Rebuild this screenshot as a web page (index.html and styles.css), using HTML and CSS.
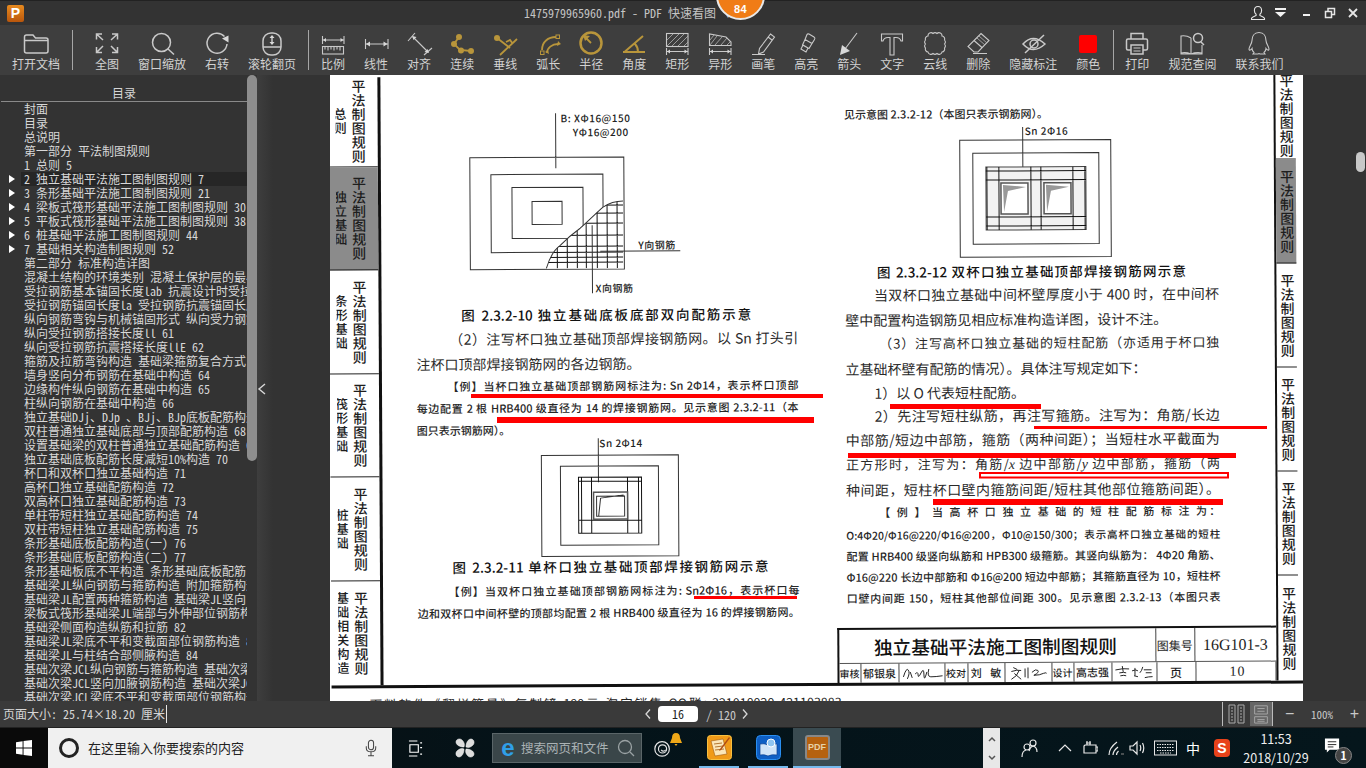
FILE: index.html
```html
<!DOCTYPE html>
<html lang="zh">
<head>
<meta charset="utf-8">
<title>PDF 快速看图</title>
<link rel="stylesheet" href="styles.css">
</head>
<body>
<div class="app">
  <header class="titlebar">
    <div class="logo">P</div>
    <div class="doc-title">1475979965960.pdf - PDF 快速看图 ∨</div>
    <div class="badge">84</div>
    <div class="winctl">
      <svg class="wi wi-user" viewBox="0 0 16 16"><path d="M8 1.500c-2.300 0-3.600 1.800-3.600 4 0 1.600.7 3 1.700 3.800v1.200c-1.500.6-4 1.400-4.600 2.800v1.200h13v-1.200c-.6-1.400-3.100-2.200-4.600-2.800V9.300c1-.8 1.700-2.200 1.700-3.800 0-2.200-1.300-4-3.600-4z"/></svg>
      <svg class="wi wi-menu" viewBox="0 0 12 12"><path class="solid" d="M0 1h11v2H0zM0 5h11L5.500 10z"/></svg>
      <svg class="wi wi-min" viewBox="0 0 12 12"><path class="solid" d="M2 7h7v2H2z"/></svg>
      <svg class="wi wi-max" viewBox="0 0 12 12"><path d="M1.500 4.500h6v6h-6zM4 4.500V1.500h6.500v6h-3" stroke-width="1.500"/></svg>
      <svg class="wi wi-close" viewBox="0 0 12 12"><path d="M2 2l8 8M10 2l-8 8" stroke-width="1.800"/></svg>
    </div>
  </header>

  <nav class="toolbar">
    <div class="tool"><svg viewBox="0 0 28 26"><path d="M2.500 7q0-2 2-2h6.500l2.500 3H24q2 0 2 2v11q0 2-2 2H4.500q-2 0-2-2zM2.500 10.500H26"/></svg><span>打开文档</span></div>
    <i class="sep sep-a"></i>
    <div class="tool"><svg viewBox="0 0 28 26"><path d="M10 10L3.500 4M3.500 9.500V4H9M18 10l6.500-6M19 4h5.500v5.500M10 16l-6.500 6.500M3.500 17v5.500H9M18 16l6.500 6.500M24.500 17v5.500H19"/></svg><span>全图</span></div>
    <div class="tool"><svg viewBox="0 0 28 26"><circle cx="13.500" cy="12.500" r="9"/><path d="M20 19l6 5.500"/></svg><span>窗口缩放</span></div>
    <div class="tool"><svg viewBox="0 0 28 26"><path d="M21.500 6.500A10 10 0 1 0 24 14"/><path class="solid" d="M19 8.500l6.500-3v7z"/></svg><span>右转</span></div>
    <div class="tool"><svg viewBox="0 0 28 26"><rect x="5" y="3" width="18" height="22" rx="8"/><path d="M5 17h18M14 6.500v7"/><path class="solid" d="M11.500 8L14 5l2.500 3zM11.500 12l2.500 3 2.500-3z"/></svg><span>滚轮翻页</span></div>
    <i class="sep sep-b"></i>
    <div class="tool"><svg viewBox="0 0 28 26"><path class="thin" d="M3.500 6v8M25 6v8M3.500 10H25"/><path class="solid" d="M4 10l3-2v4zM24.500 10l-3-2v4z"/><rect class="thin" x="3.500" y="16.500" width="21" height="7.500"/><path class="thin" d="M6 16.500v3M9 16.500v4M12 16.500v3M15 16.500v4M18 16.500v3M21 16.500v4"/></svg><span>比例</span></div>
    <div class="tool"><svg viewBox="0 0 28 26"><path class="thin" d="M3.500 9v10M26 9v10M3.500 14H26"/><path class="solid" d="M4 14l4-2.500v5zM25.500 14l-4-2.500v5z"/></svg><span>线性</span></div>
    <div class="tool"><svg viewBox="0 0 28 26"><path class="thin" d="M3 11l7-8M19 25l8-7M8 7l15 15"/><path class="solid" d="M7 6l4.500 1-3 3zM24 23l-4.500-1 3-3z"/></svg><span>对齐</span></div>
    <div class="tool gold"><svg viewBox="0 0 28 26"><path d="M11 7L6 14l6 6 11 1"/><circle class="dot" cx="11" cy="7" r="3"/><circle class="dot" cx="6" cy="14" r="3"/><circle class="dot" cx="13" cy="20.500" r="3"/><circle class="dot" cx="23" cy="21" r="3"/></svg><span>连续</span></div>
    <div class="tool gold"><svg viewBox="0 0 28 26"><path d="M6 8l13 10M26 9L9 25M15 12l4-2 3 4"/><circle class="dot" cx="6" cy="8" r="3"/></svg><span>垂线</span></div>
    <div class="tool gold"><svg viewBox="0 0 28 26"><path d="M8 20C8 12 14 7 22 7M13 23c0-5 5-9 11-9"/><rect class="fine" x="22" y="5" width="3.500" height="3.500"/><rect class="fine" x="6.500" y="21" width="3.500" height="3.500"/><path class="dotp" d="M24 11l3 3-4 2zM11 22l3-2 1 4z"/></svg><span>弧长</span></div>
    <div class="tool gold"><svg viewBox="0 0 28 26"><circle cx="14" cy="13" r="10.500" stroke-width="2.500"/><path d="M14 13L8 7"/><path class="dotp" d="M6 5l7 1-5 5z"/></svg><span>半径</span></div>
    <div class="tool gold"><svg viewBox="0 0 28 26"><path d="M3 22h22M5 21.500L23 6M15 14c2 2 3 5 3 8" stroke-width="2"/></svg><span>角度</span></div>
    <div class="tool"><svg viewBox="0 0 28 26"><rect class="thin" x="3.500" y="3.500" width="21.500" height="13"/><path class="hatch" d="M4 10l6-6M4 16l12-12M9 16L21 4M15 16L25 6M21 16l4-4"/><path class="thin" d="M3.500 18v7M25 18v7M3.500 21.500H25"/><path class="solid" d="M4 21.500l3-2v4zM24.500 21.500l-3-2v4z"/></svg><span>矩形</span></div>
    <div class="tool"><svg viewBox="0 0 28 26"><path class="thin" d="M3.500 4v11.500H25v-3.500l-5-5z"/><path class="hatch" d="M4 10l4-5M4 15L11 6M9 15l7-8M15 15l6-7M21 15l3-3"/><path class="thin" d="M3.500 18v7M25 18v7M3.500 21.500H25"/><path class="solid" d="M4 21.500l3-2v4zM24.500 21.500l-3-2v4z"/></svg><span>异形</span></div>
    <div class="tool"><svg viewBox="0 0 28 26"><path class="thin" d="M21.500 4l4 3-11 15-5 2 1-5.500zM19 7l4 3M3 24.500h13"/></svg><span>画笔</span></div>
    <div class="tool"><svg viewBox="0 0 28 26"><path class="thin" d="M17 4l5 3q1.500 1 .5 2.500L20 13.500 13 9.500l2-5q.5-1 2-.5zM13 9.500l7 4-3 5-6.500-3.500zM11 15l5 3-2 4-5-3z"/></svg><span>高亮</span></div>
    <div class="tool"><svg viewBox="0 0 28 26"><path class="thin" d="M22 3L10 19"/><path class="solid" d="M5 25l2-10 8 6z"/></svg><span>箭头</span></div>
    <div class="tool"><svg viewBox="0 0 28 26"><path class="thin" d="M3.500 4H24.500V11H23Q22 7.500 18 7.500H16V25H12V7.500H10Q6 7.500 5 11H3.500Z"/></svg><span>文字</span></div>
    <div class="tool"><svg viewBox="0 0 28 26"><path class="thin" d="M7 6a3 3 0 0 1 5-2.500 3 3 0 0 1 4 0A3 3 0 0 1 21 6a3 3 0 0 1 2.500 4 3 3 0 0 1 0 4 3 3 0 0 1 0 4A3 3 0 0 1 21 22a3 3 0 0 1-5 1.500 3 3 0 0 1-4 0A3 3 0 0 1 7 22a3 3 0 0 1-2.500-4 3 3 0 0 1 0-4 3 3 0 0 1 0-4A3 3 0 0 1 7 6z"/></svg><span>云线</span></div>
    <div class="tool"><svg viewBox="0 0 28 26"><path class="thin" d="M17 3.500l8 7-11 11.500h-4l-6-5.500zM10 10.500l8.500 7.500M9 23.500h14"/><path class="hatch" d="M13 8l8 7M15 6l8 7"/></svg><span>删除</span></div>
    <div class="tool"><svg viewBox="0 0 28 26"><path d="M4 14q10-11 22 0-12 11-22 0z"/><circle cx="15" cy="14" r="4"/><path d="M6 23L25 5"/></svg><span>隐藏标注</span></div>
    <div class="tool"><svg viewBox="0 0 28 26"><rect class="red" x="5" y="5" width="18" height="18" rx="2"/></svg><span>颜色</span></div>
    <i class="sep sep-c"></i>
    <div class="tool"><svg viewBox="0 0 28 26"><path d="M8 9V3.500h12V9M8 20H5q-1.500 0-1.500-1.500v-8Q3.500 9 5 9h18q1.500 0 1.500 1.500v8Q24.500 20 23 20h-3"/><rect x="8" y="15" width="12" height="9"/><path class="thin" d="M10.500 18h7M10.500 21h7"/></svg><span>打印</span></div>
    <div class="tool"><svg viewBox="0 0 28 26"><path class="thin" d="M13 8Q8 5 3 6v17q5-1 10 1 5-2 11-1v-8M13 8v16M3 23v1h21v-1"/><circle cx="20" cy="8" r="4.500"/><path d="M23 12l3 3"/></svg><span>规范查阅</span></div>
    <div class="tool"><svg viewBox="0 0 28 26"><path class="thin" d="M14 2.500c-5 0-7 4-7 8 0 3-3 6-3 8.500 0 2 2 1 3-.5 0 2 1 3 2 4l-1 1.500h5l1-.5 1 .5h5l-1-1.500c1-1 2-2 2-4 1 1.500 3 2.500 3 .5 0-2.500-3-5.500-3-8.500 0-4-2-8-7-8z"/></svg><span>联系我们</span></div>
  </nav>

  <main class="main">
    <aside class="sidebar">
      <div class="toc-head">目录</div>
      <ul class="toc">
        <li>封面</li>
        <li>目录</li>
        <li>总说明</li>
        <li>第一部分 平法制图规则</li>
        <li>1 总则 5</li>
        <li class="has-kids selected">2 独立基础平法施工图制图规则 7</li>
        <li class="has-kids">3 条形基础平法施工图制图规则 21</li>
        <li class="has-kids">4 梁板式筏形基础平法施工图制图规则 30</li>
        <li class="has-kids">5 平板式筏形基础平法施工图制图规则 38</li>
        <li class="has-kids">6 桩基础平法施工图制图规则 44</li>
        <li class="has-kids">7 基础相关构造制图规则 52</li>
        <li>第二部分 标准构造详图</li>
        <li>混凝土结构的环境类别 混凝土保护层的最小厚度</li>
        <li>受拉钢筋基本锚固长度lab 抗震设计时受拉钢筋</li>
        <li>受拉钢筋锚固长度la 受拉钢筋抗震锚固长度</li>
        <li>纵向钢筋弯钩与机械锚固形式 纵向受力钢筋</li>
        <li>纵向受拉钢筋搭接长度ll 61</li>
        <li>纵向受拉钢筋抗震搭接长度llE 62</li>
        <li>箍筋及拉筋弯钩构造 基础梁箍筋复合方式</li>
        <li>墙身竖向分布钢筋在基础中构造 64</li>
        <li>边缘构件纵向钢筋在基础中构造 65</li>
        <li>柱纵向钢筋在基础中构造 66</li>
        <li>独立基础DJj、DJp 、BJj、BJp底板配筋构造</li>
        <li>双柱普通独立基础底部与顶部配筋构造 68</li>
        <li>设置基础梁的双柱普通独立基础配筋构造 69</li>
        <li>独立基础底板配筋长度减短10%构造 70</li>
        <li>杯口和双杯口独立基础构造 71</li>
        <li>高杯口独立基础配筋构造 72</li>
        <li>双高杯口独立基础配筋构造 73</li>
        <li>单柱带短柱独立基础配筋构造 74</li>
        <li>双柱带短柱独立基础配筋构造 75</li>
        <li>条形基础底板配筋构造(一) 76</li>
        <li>条形基础底板配筋构造(二) 77</li>
        <li>条形基础板底不平构造 条形基础底板配筋</li>
        <li>基础梁JL纵向钢筋与箍筋构造 附加箍筋构造</li>
        <li>基础梁JL配置两种箍筋构造 基础梁JL竖向</li>
        <li>梁板式筏形基础梁JL端部与外伸部位钢筋构造</li>
        <li>基础梁侧面构造纵筋和拉筋 82</li>
        <li>基础梁JL梁底不平和变截面部位钢筋构造 83</li>
        <li>基础梁JL与柱结合部侧腋构造 84</li>
        <li>基础次梁JCL纵向钢筋与箍筋构造 基础次梁</li>
        <li>基础次梁JCL竖向加腋钢筋构造 基础次梁JCL</li>
        <li>基础次梁JCL梁底不平和变截面部位钢筋构造</li>
      </ul>
    </aside>
    <div class="side-scroll"><div class="side-thumb"></div></div>
    <div class="gutter"><svg class="gutter-arrow" viewBox="0 0 10 14"><path d="M8 2L2 7l6 5"/></svg></div>

    <section class="pdf">
      <div class="scan">
        <div class="sheet">
          <div class="ltabs">
            <div class="tab t-first"><div class="tab-small"><b>总则</b></div><b class="tab-main">平法制图规则</b></div>
            <div class="tab on"><div class="tab-small"><b>独立基础</b></div><b class="tab-main">平法制图规则</b></div>
            <div class="tab"><div class="tab-small"><b>条形基础</b></div><b class="tab-main">平法制图规则</b></div>
            <div class="tab"><div class="tab-small"><b>筏形基础</b></div><b class="tab-main">平法制图规则</b></div>
            <div class="tab"><div class="tab-small"><b>桩基础</b></div><b class="tab-main">平法制图规则</b></div>
            <div class="tab"><div class="tab-small"><b>基础相关构造</b></div><b class="tab-main">平法制图规则</b></div>
          </div>

          <div class="col col-left">
            <svg class="fig fig1" viewBox="416 105 382 195">
              <defs><clipPath id="mesh"><path d="M546 268C549 258 553 250 560 245 566 239 573 233 580 228 588 221 596 213 603 207 609 203 615 201 623 201V268Z"/></clipPath></defs>
              <path class="ln-w" d="M556 113V168M470 157H624V269H470ZM491 174H603V252H491ZM512 187H583V238H512ZM532 201H562V224H532Z"/>
              <path class="white" d="M546 268C549 258 553 250 560 245 566 239 573 233 580 228 588 221 596 213 603 207 609 203 615 201 623 201V268Z"/>
              <g clip-path="url(#mesh)"><path class="ln-b" d="M557 200V270M567 200V270M577 200V270M586 200V270M597 200V270M607 200V270M617 200V270M540 205H625M540 213H625M540 223H625M540 235H625M540 246H625M540 252H625M540 257H625M540 262H625"/></g>
              <path class="ln-w" d="M546 268C549 258 553 250 560 245 566 239 573 233 580 228 588 221 596 213 603 207 609 203 615 201 623 201M600 251H680M592 225V293"/>
              <text class="fig-t" x="561" y="122">B: XΦ16@150</text>
              <text class="fig-t" x="573" y="136">YΦ16@200</text>
              <text class="fig-t" x="638" y="249">Y向钢筋</text>
              <text class="fig-t" x="595" y="292">X向钢筋</text>
            </svg>
            <p class="cap cap1">图 2.3.2-10 独立基础底板底部双向配筋示意</p>
            <p class="ln ind">（2）注写杯口独立基础顶部焊接钢筋网。以 Sn 打头引</p>
            <p class="ln last">注杯口顶部焊接钢筋网的各边钢筋。</p>
            <p class="ex ind pull">【例】当杯口独立基础顶部钢筋网标注为: Sn 2Φ14，表示杯口顶部</p>
            <p class="ex">每边配置 2 根 HRB400 级直径为 14 的焊接钢筋网。见示意图 2.3.2-11（本</p>
            <p class="ex last">图只表示钢筋网）。</p>
            <svg class="fig fig2" viewBox="416 438 382 120">
              <path class="ln-w" d="M597 438V482M540 455H677V556H540ZM559 466H657V545H559Z"/>
              <path class="ln-b" d="M577 477H640V533H577ZM580 477V533M590 477V533M626 477V533M637 477V533M577 481H640M577 520H640"/>
              <rect class="cup" x="592" y="492" width="34" height="27"/>
              <path class="ln-w" d="M595 496H623V516H595ZM599 498L622 495M597 516L599 498"/>
              <text class="fig-t" x="598" y="447">Sn 2Φ14</text>
            </svg>
            <p class="cap cap2">图 2.3.2-11 单杯口独立基础顶部焊接钢筋网示意</p>
            <p class="ex ind roomy">【例】当双杯口独立基础顶部钢筋网标注为: Sn2Φ16，表示杯口每</p>
            <p class="ex">边和双杯口中间杯壁的顶部均配置 2 根 HRB400 级直径为 16 的焊接钢筋网。</p>
          </div>

          <div class="col col-right">
            <p class="ex last top">见示意图 2.3.2-12（本图只表示钢筋网）。</p>
            <svg class="fig fig3" viewBox="845 123 374 137">
              <path class="ln-w" d="M1023 127V173M960 140H1111V257H960ZM973 153H1099V244H973Z"/>
              <rect class="mesh-bg" x="986" y="167" width="100" height="63"/>
              <path class="ln-b" d="M987 167V230M999 167V230M1031 167V230M1041 167V230M1073 167V230M1085 167V230M986 171H1086M986 180H1086M986 217H1086M986 226H1086"/>
              <rect class="cup" x="1001" y="183" width="27" height="31"/>
              <rect class="cup" x="1044" y="183" width="27" height="31"/>
              <path class="gray" d="M1003 185L1026 187 1008 191 1004 212ZM1046 185L1069 187 1051 191 1047 212Z"/>
              <text class="fig-t" x="1025" y="135">Sn 2Φ16</text>
            </svg>
            <p class="cap cap3">图 2.3.2-12 双杯口独立基础顶部焊接钢筋网示意</p>
            <p class="ln ind">当双杯口独立基础中间杯壁厚度小于 400 时，在中间杯</p>
            <p class="ln last">壁中配置构造钢筋见相应标准构造详图，设计不注。</p>
            <p class="ln small ind3">（3）注写高杯口独立基础的短柱配筋（亦适用于杯口独</p>
            <p class="ln last">立基础杯壁有配筋的情况）。具体注写规定如下：</p>
            <p class="ln ind last">1）以 O 代表短柱配筋。</p>
            <p class="ln ind pull2">2）先注写短柱纵筋，再注写箍筋。注写为：角筋/长边</p>
            <p class="ln">中部筋/短边中部筋，箍筋（两种间距）；当短柱水平截面为</p>
            <p class="ln small">正方形时，注写为：角筋/<em>x</em> 边中部筋/<em>y</em> 边中部筋，箍筋（两</p>
            <p class="ln">种间距，短柱杯口壁内箍筋间距/短柱其他部位箍筋间距）。</p>
            <p class="ex ind pull3">【 例 】 当 高 杯 口 独 立 基 础 的 短 柱 配 筋 标 注 为：</p>
            <p class="ex ex21 gap tight">O:4Φ20/Φ16@220/Φ16@200，Φ10@150/300；表示高杯口独立基础的短柱</p>
            <p class="ex ex21">配置 HRB400 级竖向纵筋和 HPB300 级箍筋。其竖向纵筋为： 4Φ20 角筋、</p>
            <p class="ex ex21">Φ16@220 长边中部筋和 Φ16@200 短边中部筋；其箍筋直径为 10，短柱杯</p>
            <p class="ex ex21">口壁内间距 150，短柱其他部位间距 300。见示意图 2.3.2-13（本图只表</p>

            <div class="block">
              <div class="block-top">
                <div class="block-title">独立基础平法施工图制图规则</div>
                <div class="block-label">图集号</div>
                <div class="block-no">16G101-3</div>
              </div>
              <div class="block-bottom">
                <div class="c c22">审核</div>
                <div class="c c38">郁银泉</div>
                <div class="c c46"><svg class="sig" viewBox="0 0 46 18"><path d="M4 13Q7 3 9 6T8 15M11 8l2 6M16 10q3-3 3 1t3-2 3 2 3-3M30 5q-2 8 2 8 5 0 12-1"/></svg></div>
                <div class="c c23">校对</div>
                <div class="c c37 spread">刘 敏</div>
                <div class="c c47"><svg class="sig" viewBox="0 0 47 18"><path d="M8 4l4 2M6 8q6-2 10-1M14 7q-2 6-8 9M9 10l7 6M20 5v9M23 4v11M27 9q4-4 6-2t-4 5q6 0 10-2 3-1 3 0"/></svg></div>
                <div class="c c22">设计</div>
                <div class="c c38">高志强</div>
                <div class="c c45"><svg class="sig" viewBox="0 0 45 18"><path d="M3 7q8-2 14-1M10 3l1 6M7 10q5-1 7 0M8 13q4-1 6 0M20 8q4-2 6 0M23 5v8M22 13l4 1M31 4q-1 4-3 6M32 7h8M34 10h6M33 15q4-1 8-1"/></svg></div>
                <div class="c c39">页</div>
                <div class="c c-ten">10</div>
              </div>
            </div>
          </div>

          <div class="rtabs">
            <div class="rtab r-first"><b class="tab-main">平法制图规则</b></div>
            <div class="rtab on"><b class="tab-main">平法制图规则</b></div>
            <div class="rtab"><b class="tab-main">平法制图规则</b></div>
            <div class="rtab"><b class="tab-main">平法制图规则</b></div>
            <div class="rtab"><b class="tab-main">平法制图规则</b></div>
            <div class="rtab"><b class="tab-main">平法制图规则</b></div>
          </div>
        </div>
        <p class="foot">下料软件《翻样算量》复制镜 180元 淘宝销售 QQ联: 321010020 421103883</p>
      </div>

      <svg class="marks" viewBox="330 75 973 626">
        <rect x="471" y="394" width="352" height="4"/>
        <rect x="497" y="417" width="317" height="6"/>
        <rect x="694" y="596" width="103" height="3"/>
        <rect x="890" y="404" width="151" height="5"/>
        <rect x="1034" y="426" width="233" height="3"/>
        <rect x="848" y="453" width="388" height="5"/>
        <rect class="ring" x="980" y="473" width="248" height="4.500"/>
        <rect x="933" y="499" width="290" height="6"/>
      </svg>
    </section>

    <div class="right-gutter"><div class="right-thumb"></div></div>
  </main>

  <footer class="status">
    <div class="status-size"><span class="size-text">页面大小: 25.74×18.20 厘米</span></div>
    <div class="pager">
      <svg class="chev" viewBox="0 0 8 12"><path d="M6 1.500L2 6l4 4.500"/></svg>
      <div class="page-box">16</div>
      <span class="page-total">/ 120</span>
      <svg class="chev" viewBox="0 0 8 12"><path d="M2 1.500L6 6l-4 4.500"/></svg>
    </div>
    <div class="view">
      <div class="view-btn"><svg viewBox="0 0 20 22"><path d="M2 2h6v18H2zM11 2h6v18h-6zM4 5h2M4 8h2M4 11h2M4 14h2M4 17h2M13 5h2M13 8h2M13 11h2M13 14h2M13 17h2"/></svg></div>
      <div class="view-btn lit"><svg viewBox="0 0 22 22"><path d="M4 2h14v9H4zM4 14h14v7H4zM7 5h8M7 8h8M7 17h8M7 19h8"/></svg></div>
    </div>
    <div class="zoomctl"><span class="z-sign">−</span><span class="z-val">100%</span><span class="z-sign">+</span></div>
  </footer>

  <div class="taskbar">
    <div class="start"><svg viewBox="0 0 17 17"><path d="M0 2.300l7-1v6.700H0zM8 1.100l9-1.100v8H8zM0 9h7v6.700l-7-1zM8 9h9v8l-9-1.100z"/></svg></div>
    <div class="search">
      <i class="cortana"></i>
      <span class="search-text">在这里输入你要搜索的内容</span>
      <svg class="mic" viewBox="0 0 14 20"><rect x="4" y="1" width="6" height="11" rx="3"/><path d="M1.500 8v2q0 4.500 5.500 4.500T12.500 10V8M7 14.500V19M3.500 19h7"/></svg>
    </div>
    <div class="tb-slot s-task"><svg class="ti-line" viewBox="0 0 16 18"><path d="M1 1h9M1 17h9M2 5h9v8H2zM13 3h2M13 8h2M13 15h2"/></svg></div>
    <div class="tb-slot s-pin"><svg class="ti-pin" viewBox="0 0 22 22"><path d="M10 10C6 10 2 8 2 5s4-4 6-2 3 4 2 7zM12 10c0-4 2-8 5-8s4 4 2 6-4 3-7 2zM12 12c4 0 8 2 8 5s-4 4-6 2-3-4-2-7zM10 12c0 4-2 8-5 8s-4-4-2-6 4-3 7-2z"/></svg></div>
    <div class="edge-box">
      <span class="edge-e">e</span>
      <span class="edge-text">搜索网页和文件</span>
      <svg class="edge-mag" viewBox="0 0 18 18"><circle cx="8" cy="8" r="6.500"/><path d="M13 13l4 4"/></svg>
    </div>
    <div class="tb-slot s-swirl">
      <svg class="ti-swirl" viewBox="0 0 22 22"><circle cx="10" cy="12" r="8"/><circle cx="10.500" cy="12" r="4.500"/><path d="M14 13q-3 3-5 0"/></svg>
      <svg class="ti-bell" viewBox="0 0 12 14"><path d="M6 0q4 0 4 5l2 5H0l2-5q0-5 4-5zM4.500 11h3L6 13z"/></svg>
    </div>
    <div class="app-btn a1"><svg class="appi" viewBox="0 0 25 25"><rect class="orange-bg" x=".5" y=".5" width="24" height="24" rx="3"/><path class="note" d="M4 6l12-2 4 15-12 2z"/><path class="note-l" d="M7 9l8-1M8 12l8-1M8 15l9-1"/><path class="pen" d="M22 2l1 1-9 12-2 1 1-2z"/></svg></div>
    <div class="app-btn a2"><svg class="appi" viewBox="0 0 25 25"><rect class="blue-bg" x=".5" y=".5" width="24" height="24" rx="4"/><path class="book" d="M4 9q4-1 8 1 4-2 9-1v11q-5-1-9 1-4-2-8-1z"/><circle class="lens" cx="15" cy="8" r="4"/></svg></div>
    <div class="app-btn a3 active"><div class="pdfi">PDF</div></div>
    <div class="tb-fill"></div>
    <div class="tb-scroll"><svg viewBox="0 0 10 30"><path d="M2 8l3-3 3 3M2 23l3 3 3-3"/></svg></div>
    <svg class="tray t-people" viewBox="0 0 20 20"><circle cx="7" cy="9" r="3"/><circle cx="13" cy="5" r="3"/><path d="M2 19q0-6 4-7M9 13q1-4 4-5 4 1 4 6"/></svg>
    <svg class="tray t-up" viewBox="0 0 14 14"><path d="M1 10l6-6 6 6"/></svg>
    <svg class="tray t-batt" viewBox="0 0 16 16"><path d="M3 5h11v8H2V6zM14 7h2v4h-2zM5 1v4M8 1v4M4 3h5"/></svg>
    <svg class="tray t-wifi" viewBox="0 0 18 16"><path d="M2 15q0-7 8-13M6 15q0-4 5-8M9.500 15q0-2 2-4"/><path class="tray-dim" d="M14 14h3"/></svg>
    <svg class="tray t-vol" viewBox="0 0 16 16"><path d="M1 6h3l4-4v12l-4-4H1zM11 5q1.500 3 0 6M13.500 3q2.500 5 0 10"/></svg>
    <svg class="tray t-kbd" viewBox="0 0 23 16"><rect x=".5" y="1" width="22" height="14"/><path d="M3 4.500h17M3 7.500h17M3 10.500h17M6 13h11" stroke-dasharray="1.500 1"/></svg>
    <span class="tray-ime">中</span>
    <span class="tray-sogou">S</span>
    <div class="clock"><span>11:53</span><span>2018/10/29</span></div>
    <div class="notify"><svg viewBox="0 0 18 16"><path class="solid" d="M1 0h15v12H6l-3 3v-3H1z"/><path class="notify-lines" d="M4 3.500h9M4 6.500h9M4 9h6"/></svg><span class="notify-count">1</span></div>
  </div>
</div>
</body>
</html>
```

FILE: styles.css
```css
* { box-sizing: border-box; }
html, body { margin: 0; padding: 0; }
body { width: 1366px; height: 768px; overflow: hidden; background: #333; font-family: "Noto Sans Mono CJK SC", "Noto Sans CJK SC", sans-serif; color: #d6d6d6; font-size: 12px; }
p { margin: 0; }
ul { margin: 0; padding: 0; list-style: none; }
.app { display: flex; flex-direction: column; width: 1366px; height: 768px; position: relative; }

/* title bar */
.titlebar { height: 25px; flex: none; background: #333; border-top: 1px solid #222; display: flex; align-items: center; position: relative; }
.logo { width: 17px; height: 17px; margin-left: 7px; border-radius: 2px; background: linear-gradient(#e78a1f, #b9560c); color: #fff; font: 700 14px/17px "Liberation Sans", sans-serif; text-align: center; }
.doc-title { margin-left: 500px; color: #c4c4c4; line-height: 14px; white-space: nowrap; }
.badge { position: absolute; left: 716px; top: -30px; width: 49px; height: 49px; border-radius: 50%; background: #f07c16; border: 2px solid #e8e8e8; color: #fff; font: 700 11px/1 "Liberation Sans", sans-serif; text-align: center; padding-top: 31px; letter-spacing: .5px; }
.winctl { margin-left: auto; display: flex; align-items: center; height: 24px; }
.wi { display: block; fill: none; stroke: #e6e6e6; stroke-width: 1.100; }
.wi .solid { fill: #f2f2f2; stroke: none; }
.wi-user { width: 16px; height: 16px; margin-right: 9px; }
.wi-menu { width: 12px; height: 12px; margin-right: 14px; }
.wi-min { width: 12px; height: 12px; margin-right: 11px; }
.wi-max { width: 12px; height: 12px; margin-right: 11px; }
.wi-close { width: 12px; height: 12px; margin-right: 7px; }

/* toolbar */
.toolbar { height: 50px; flex: none; background: #3e3e3e; display: flex; align-items: flex-start; gap: 19px; padding: 5px 0 0 12px; }
.tool { display: flex; flex-direction: column; align-items: center; white-space: nowrap; min-width: 0; }
.tool svg { width: 28px; height: 26px; flex: none; margin: 0 -2px; fill: none; stroke: #c9c9c9; stroke-width: 1.500; display: block; }
.tool span { line-height: 15px; color: #d2d2d2; }
.tool .solid { fill: #d8d8d8; stroke: none; }
.tool .thin { stroke-width: 1.100; }
.tool .hatch { stroke-width: .8; stroke: #b5b5b5; }
.tool .red { fill: #f00; stroke: none; }
.gold svg { stroke: #b8953b; stroke-width: 1.800; }
.gold .dot { fill: #b8953b; stroke: none; }
.gold .dotp { fill: #b8953b; stroke: none; }
.gold .fine { stroke-width: 1; }
.sep { display: block; width: 1px; height: 40px; background: #a6a6a6; flex: none; }
.sep-a { margin-left: -7px; margin-right: 3px; }
.sep-b { margin-left: -7px; margin-right: -7px; }
.sep-c { margin-left: -6px; margin-right: -8px; }

/* main area */
.main { display: flex; height: 626px; flex: none; }
.sidebar { width: 247px; flex: none; background: #333; overflow: hidden; }
.toc-head { height: 27px; padding-top: 10px; line-height: 16px; border-bottom: 1px solid #8a8a8a; text-align: center; color: #d6d6d6; margin-left: 1px; }
.toc { padding-top: 0; }
.toc li { height: 14px; line-height: 14px; padding-left: 24px; white-space: nowrap; position: relative; color: #d8d8d8; }
.has-kids::before { content: ""; position: absolute; left: 9px; top: 3px; border-left: 6px solid #fff; border-top: 4px solid transparent; border-bottom: 4px solid transparent; }
.selected { background: linear-gradient(90deg, transparent 21px, #262626 21px); }
.side-scroll { width: 10px; flex: none; background: #333; }
.side-thumb { height: 386px; background: #8e8e8e; border-radius: 5px; }
.gutter { width: 73px; flex: none; display: flex; align-items: center; background: linear-gradient(90deg, #3e3e3e, #333 16px); }
.gutter-arrow { width: 10px; height: 14px; margin-top: 2px; fill: none; stroke: #d8d8d8; stroke-width: 1.400; }

/* PDF page */
.pdf { width: 973px; flex: none; background: #fff; overflow: hidden; position: relative; color: #1e1e1e; font-family: "Noto Sans CJK SC", sans-serif; }
.scan { transform: rotate(-.3deg); transform-origin: 486px 313px; height: 640px; }
.sheet { display: flex; height: 611px; border-bottom: 3px solid #111; }
.ltabs { width: 52px; flex: none; border-right: 3px solid #111; display: flex; flex-direction: column; }
.tab { height: 103.600px; flex: none; display: flex; align-items: center; padding-left: 7px; gap: 5px; border-bottom: 1.500px solid #222; }
.tab:last-child { border-bottom: 0; }
.t-first { height: 89.700px; }
.on { background: #8b8b8b; }
.tab-small { width: 11px; flex: none; display: flex; justify-content: flex-end; overflow: hidden; }
.tab-small b { writing-mode: vertical-rl; font-size: 13px; line-height: 13px; font-weight: 500; letter-spacing: 1px; white-space: nowrap; flex: none; }
.tab-main { writing-mode: vertical-rl; font-size: 14px; line-height: 14px; font-weight: 500; white-space: nowrap; flex: none; display: block; }
.col { display: flex; flex-direction: column; flex: none; }
.col-left { width: 448px; padding: 29px 31.500px 0 34.500px; }
.col-right { width: 444.500px; padding: 29px 55px 0 15.500px; }
.fig { display: block; width: 100%; flex: none; overflow: visible; }
.fig1 { height: 195px; }
.fig2 { height: 120px; margin-top: -2px; }
.fig3 { height: 137px; }
.ln-w { fill: none; stroke: #333; stroke-width: 1; }
.ln-b { fill: none; stroke: #111; stroke-width: 1; }
.white { fill: #fff; }
.cup { fill: #fff; stroke: #555; stroke-width: 1.500; }
.mesh-bg { fill: #f2f2f2; stroke: #444; stroke-width: 1; }
.gray { fill: #999; stroke: none; }
.fig-t { font: 500 10px "Noto Sans CJK SC", sans-serif; fill: #222; letter-spacing: .5px; }
.cap, .ln, .ex { text-align: justify; text-align-last: justify; }
.last { text-align-last: left; }
.cap { font-size: 13.500px; font-weight: 500; white-space: nowrap; color: #111; }
.cap1 { margin: 2px 0 0 45px; width: 290px; line-height: 24px; }
.cap2 { margin: 0 0 0 35px; width: 316px; line-height: 16px; }
.cap3 { margin: 0 0 0 32px; width: 309px; line-height: 22px; }
.ln { font-size: 14px; line-height: 24.500px; color: #2a2a2a; }
.ex { font-size: 11px; line-height: 22px; color: #262626; font-weight: 500; }
.col-left .ind { margin-left: 33px; }
.col-right .ind { margin-left: 29px; }
.col-right .ind3 { margin-left: 34px; }
.col-left .ex.ind { margin-left: 31px; }
.pull { margin-top: -1px; }
.roomy { margin-top: 5px; }
.top { line-height: 20px; }
.pull2 { margin-top: -2px; }
.col-right .pull3 { margin-top: -1.500px; margin-left: 33px; }
.small { font-size: 13px; }
.small em { font-family: "Liberation Serif", serif; font-size: 14px; }
.ex21 { line-height: 21px; }
.tight { font-size: 10.500px; }
.gap { margin-top: 1.500px; }

.block { margin: auto -55px 0 -10px; height: 55px; flex: none; border-top: 2px solid #111; border-left: 2px solid #111; display: flex; flex-direction: column; }
.block-top { height: 34px; flex: none; display: flex; border-bottom: 1px solid #555; }
.block-title { width: 316px; flex: none; font-size: 18.700px; line-height: 34px; font-weight: 500; padding-left: 35px; white-space: nowrap; color: #111; }
.block-label { width: 39px; flex: none; border-left: 1px solid #444; font-size: 12px; line-height: 34px; text-align: center; }
.block-no { flex: 1; border-left: 1px solid #444; font: 16px/34px "Liberation Serif", serif; text-align: center; }
.block-bottom { flex: 1; display: flex; }
.c { border-right: 1px solid #444; font-size: 10px; line-height: 19px; text-align: center; flex: none; white-space: nowrap; font-weight: 500; overflow: hidden; }
.c22 { width: 22px; } .c23 { width: 23px; } .c37 { width: 37px; font-size: 11px; } .c38 { width: 38px; font-size: 11px; } .c39 { width: 39px; font-size: 12px; } .c45 { width: 45px; } .c46 { width: 46px; } .c47 { width: 47px; }
.spread { word-spacing: 6px; }
.c-ten { flex: 1; font: 14px/19px "Liberation Serif", serif; text-align: center; letter-spacing: 1px; padding-left: 4px; }
.sig { display: block; width: 100%; height: 19px; fill: none; stroke: #222; stroke-width: 1; }
.rtabs { width: 22.500px; flex: none; border-left: 2.500px solid #111; display: flex; flex-direction: column; }
.rtab { height: 104px; flex: none; padding-left: 4.500px; display: flex; align-items: center; border-bottom: 1.500px solid #222; }
.rtab:last-child { border-bottom: 0; height: 105px; }
.r-first { height: 87.400px; }
.foot { margin: 8px 0 0 38px; width: 472px; font-size: 12.500px; line-height: 16px; white-space: nowrap; text-align: justify; text-align-last: justify; color: #222; }
.marks { position: absolute; left: 0; top: 0; width: 973px; height: 626px; fill: #f00; }
.marks .ring { fill: #fff; stroke: #f00; stroke-width: 2; }
.right-gutter { flex: 1; background: #333; display: flex; justify-content: flex-end; align-items: flex-start; padding: 77px 1px 0 0; }
.right-thumb { width: 9px; height: 20px; border-radius: 4.500px; background: #c8c8c8; }

/* status bar */
.status { height: 27px; flex: none; background: #3a3a3a; border-bottom: 1px solid #222; display: flex; align-items: center; }
.status-size { width: 640px; flex: none; padding-left: 3px; }
.size-text { display: inline-block; height: 18px; line-height: 18px; padding-right: 1px; border-right: 1px solid #e8e8e8; width: 164px; white-space: nowrap; color: #d6d6d6; }
.pager { display: flex; align-items: center; width: 582px; flex: none; }
.chev { width: 8px; height: 12px; fill: none; stroke: #d8d8d8; stroke-width: 1.300; flex: none; margin-left: 4px; }
.page-box { width: 40px; height: 16px; margin-left: 6px; background: #fff; border-radius: 4px; color: #222; text-align: center; line-height: 16px; }
.page-total { margin-left: 8px; width: 31px; color: #c8c8c8; white-space: nowrap; }
.view { width: 51px; height: 24px; flex: none; display: flex; gap: 3px; padding-left: 4px; border-left: 1px solid #bbb; border-right: 1px solid #bbb; }
.view-btn { width: 20px; display: flex; align-items: center; justify-content: center; }
.view-btn.lit { background: #666; width: 23px; }
.view-btn svg { width: 20px; height: 22px; fill: none; stroke: #aaa; stroke-width: 1; }
.zoomctl { flex: 1; display: flex; justify-content: space-between; align-items: center; padding: 0 7px 0 12px; color: #c8c8c8; }
.z-sign { font: 16px "Liberation Sans", sans-serif; }
.z-val { font-size: 11px; }

/* task bar */
.taskbar { height: 40px; flex: 1; display: flex; align-items: stretch; padding-right: 16px; background: linear-gradient(90deg, #0c0f10, #041319 40%, #05161c); color: #fff; font-family: "Noto Sans CJK SC", sans-serif; }
.start { width: 48px; flex: none; display: flex; align-items: center; justify-content: center; background: #0a0a0a; }
.start svg { width: 16px; height: 16px; fill: #fff; }
.search { width: 344px; flex: none; background: #f0f0f0; color: #222; display: flex; align-items: center; padding-left: 11px; }
.cortana { width: 20px; height: 20px; border-radius: 50%; border: 3px solid #222; flex: none; display: block; }
.search-text { margin-left: 9px; font-size: 13px; line-height: 18px; white-space: nowrap; }
.mic { width: 12px; height: 18px; margin-left: auto; margin-right: 15px; fill: none; stroke: #444; stroke-width: 1.200; }
.tb-slot { flex: none; display: flex; align-items: center; justify-content: center; position: relative; }
.s-task { width: 46px; }
.ti-line { width: 15px; height: 17px; fill: none; stroke: #fff; stroke-width: 1.200; }
.s-pin { width: 54px; }
.ti-pin { width: 22px; height: 22px; fill: #ddd; stroke: #fff; stroke-width: .5; }
.edge-box { width: 150px; flex: none; margin: 5px 0; background: #3a4649; border: 1px solid #5a6568; display: flex; align-items: center; padding-left: 4px; }
.edge-e { font: 700 24px/28px "Liberation Sans", sans-serif; color: #2f9fe8; width: 22px; text-align: center; flex: none; }
.edge-text { margin-left: 2px; font-size: 12.500px; line-height: 16px; color: #aab2b4; white-space: nowrap; }
.edge-mag { width: 18px; height: 18px; margin-left: auto; margin-right: 6px; fill: none; stroke: #9aa2a4; stroke-width: 1.300; }
.s-swirl { width: 50px; padding-right: 8px; }
.ti-swirl { width: 20px; height: 20px; fill: none; stroke: #e4e4e4; stroke-width: 1.300; }
.ti-bell { position: absolute; left: 28px; top: 5px; width: 12px; height: 14px; fill: #f0a818; }
.app-btn { width: 40px; flex: none; display: flex; align-items: center; justify-content: center; border-bottom: 2px solid #76b9ed; }
.a1 { margin-left: 7px; }
.a2 { margin-left: 9px; }
.a3 { width: 48px; margin-left: 5px; }
.active { background: #3a4b51; }
.appi { display: block; width: 25px; height: 25px; }
.orange-bg { fill: #f09a18; stroke: #f8c040; }
.note { fill: #fbe6b8; stroke: #a05a10; stroke-width: .6; }
.note-l { fill: none; stroke: #a05a10; stroke-width: .8; }
.pen { fill: #b04a10; }
.blue-bg { fill: #0e5fc4; stroke: #2a8ff0; }
.book { fill: #cfe4f8; stroke: #0a3f90; stroke-width: .7; }
.lens { fill: #8fc4f0; stroke: #fff; stroke-width: 1; }
.pdfi { width: 25px; height: 25px; border-radius: 3px; background: #b5610f; border: 2px solid #888; color: #e6d2a8; font: 700 9px/21px "Liberation Sans", sans-serif; text-align: center; }
.tb-fill { flex: 1; }
.tb-scroll { width: 17px; flex: none; background: #e8e8e8; display: flex; align-items: center; justify-content: center; }
.tb-scroll svg { width: 10px; height: 30px; fill: none; stroke: #555; stroke-width: 1.500; }
.tray { flex: none; align-self: center; fill: none; stroke: #e8e8e8; stroke-width: 1.200; display: block; }
.tray-dim { stroke: #777; }
.t-people { width: 20px; height: 20px; margin-left: 20px; }
.t-up { width: 14px; height: 14px; margin-left: 18px; }
.t-batt { width: 16px; height: 16px; margin-left: 10px; }
.t-wifi { width: 18px; height: 16px; margin-left: 9px; }
.t-vol { width: 16px; height: 16px; margin-left: 4px; }
.t-kbd { width: 23px; height: 16px; margin-left: 9px; stroke-width: 1; }
.tray-ime { width: 14px; margin-left: 9px; align-self: center; font-size: 14px; line-height: 18px; flex: none; }
.tray-sogou { width: 16px; height: 18px; margin-left: 14px; align-self: center; background: #e8421a; border-radius: 4px; font: 700 14px/18px "Liberation Sans", sans-serif; text-align: center; flex: none; }
.clock { width: 80px; margin-left: 6px; flex: none; display: flex; flex-direction: column; align-items: center; justify-content: center; gap: 3px; font-size: 12.500px; line-height: 16px; color: #f0f0f0; white-space: nowrap; }
.notify { width: 34px; flex: none; position: relative; display: flex; align-items: center; justify-content: center; }
.notify svg { width: 17px; height: 16px; margin-top: -4px; margin-right: 1px; }
.notify .solid { fill: #fff; }
.notify-lines { stroke: #222; stroke-width: 1; fill: none; }
.notify-count { position: absolute; left: 19px; top: 19px; width: 17px; height: 17px; border-radius: 50%; background: #444; border: 1px solid #888; font-size: 11px; font-weight: 700; line-height: 15px; text-align: center; }
```
